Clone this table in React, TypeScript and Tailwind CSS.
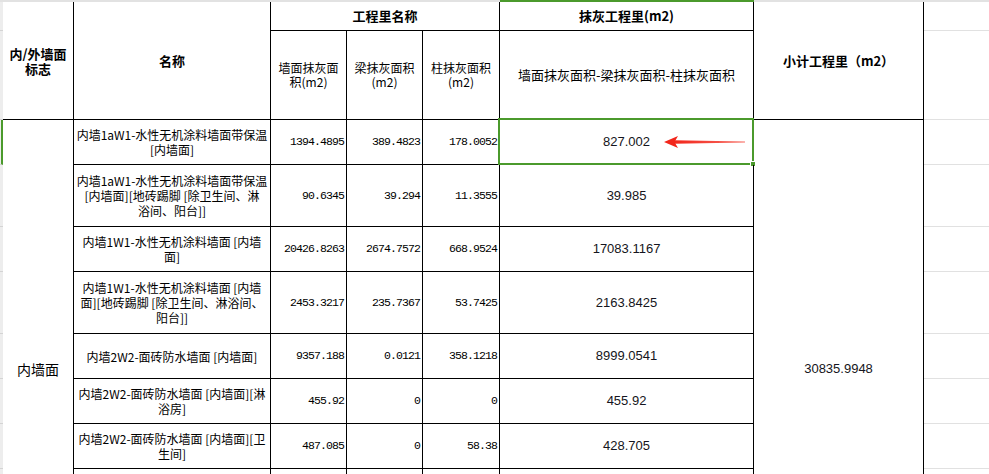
import React from "react";

const cjk = "font-['Noto_Sans_CJK_SC',sans-serif]";
const mono = "font-['Liberation_Mono',monospace] text-[11.5px] tracking-[-0.9px]";
const arial = "font-['Liberation_Sans',Arial,sans-serif] text-[13px]";

const rows = [
  {
    h: "h-[45px]",
    name: ["内墙1aW1-水性无机涂料墙面带保温", "[内墙面]"],
    c: "1394.4895",
    d: "389.4823",
    e: "178.0052",
    f: "827.002",
    selected: true,
  },
  {
    h: "h-[62px]",
    name: ["内墙1aW1-水性无机涂料墙面带保温", "[内墙面][地砖踢脚 [除卫生间、淋", "浴间、阳台]]"],
    c: "90.6345",
    d: "39.294",
    e: "11.3555",
    f: "39.985",
  },
  {
    h: "h-[45px]",
    name: ["内墙1W1-水性无机涂料墙面 [内墙", "面]"],
    c: "20426.8263",
    d: "2674.7572",
    e: "668.9524",
    f: "17083.1167",
  },
  {
    h: "h-[62px]",
    name: ["内墙1W1-水性无机涂料墙面 [内墙", "面][地砖踢脚 [除卫生间、淋浴间、", "阳台]]"],
    c: "2453.3217",
    d: "235.7367",
    e: "53.7425",
    f: "2163.8425",
  },
  {
    h: "h-[45px]",
    name: ["内墙2W2-面砖防水墙面 [内墙面]"],
    c: "9357.188",
    d: "0.0121",
    e: "358.1218",
    f: "8999.0541",
  },
  {
    h: "h-[45px]",
    name: ["内墙2W2-面砖防水墙面 [内墙面][淋", "浴房]"],
    c: "455.92",
    d: "0",
    e: "0",
    f: "455.92",
  },
  {
    h: "h-[45px]",
    name: ["内墙2W2-面砖防水墙面 [内墙面][卫", "生间]"],
    c: "487.085",
    d: "0",
    e: "58.38",
    f: "428.705",
  },
  { h: "h-[45px]", name: [], c: "", d: "", e: "", f: "" },
  { h: "h-[45px]", name: [], c: "", d: "", e: "", f: "" },
  { h: "h-[60px]", name: [], c: "", d: "", e: "", f: "" },
];

function Arrow() {
  return (
    <svg
      className="absolute left-[164px] top-[15px]"
      width="82"
      height="14"
      viewBox="0 0 82 14"
    >
      <defs>
        <linearGradient id="tail" x1="0" x2="1" y1="0" y2="0">
          <stop offset="0" stopColor="#f2261b" />
          <stop offset="1" stopColor="#f76a60" />
        </linearGradient>
      </defs>
      <path d="M10 5.3 L81 6.5 L81 7.5 L10 8.7 Z" fill="url(#tail)" />
      <path d="M0 7 L14 1 L10.5 7 L14 13 Z" fill="#f2261b" />
    </svg>
  );
}

export default function App() {
  const line = "border-r border-b border-black";
  const grid = "border-b border-[#e1e1e1]";
  const strip = "bg-[#ededed] border-b border-[#d4d4d4]";

  return (
    <div className="w-[989px] h-[474px] overflow-hidden bg-white text-black">
      {/* top gridline with column highlight */}
      <div className="flex h-[2px]">
        <div className="w-[500px] bg-[#e2e2e2]" />
        <div className="w-[254px] bg-[#4b9a2c]" />
        <div className="flex-1 bg-[#e2e2e2]" />
      </div>

      <table className="w-[989px] table-fixed border-separate border-spacing-0">
        <colgroup>
          <col className="w-[3px]" />
          <col className="w-[71px]" />
          <col className="w-[197px]" />
          <col className="w-[76px]" />
          <col className="w-[76px]" />
          <col className="w-[77px]" />
          <col className="w-[254px]" />
          <col className="w-[170px]" />
          <col />
        </colgroup>
        <tbody>
          <tr className="h-[29px]">
            <td className={strip} />
            <td rowSpan={2} className={`${line} ${cjk} text-[13px] font-bold leading-[15px] text-center align-middle p-0`}>
              内/外墙面
              <br />
              标志
            </td>
            <td rowSpan={2} className={`${line} ${cjk} text-[13px] font-bold text-center align-middle p-0`}>
              名称
            </td>
            <td colSpan={3} className={`${line} ${cjk} text-[13px] font-bold text-center align-middle p-0`}>
              工程里名称
            </td>
            <td className={`${line} ${cjk} text-[13px] font-bold text-center align-middle p-0`}>
              抹灰工程里(m2)
            </td>
            <td rowSpan={2} className={`${line} ${cjk} text-[13px] font-bold text-center align-middle p-0`}>
              小计工程里（m2）
            </td>
            <td className={grid} />
          </tr>
          <tr className="h-[89px]">
            <td className={strip} />
            <td className={`${line} ${cjk} text-[12px] leading-[14px] text-center align-middle p-0`}>
              墙面抹灰面
              <br />
              积(m2)
            </td>
            <td className={`${line} ${cjk} text-[12px] leading-[14px] text-center align-middle p-0`}>
              梁抹灰面积
              <br />
              (m2)
            </td>
            <td className={`${line} ${cjk} text-[12px] leading-[14px] text-center align-middle p-0`}>
              柱抹灰面积
              <br />
              (m2)
            </td>
            <td className={`${line} ${cjk} text-[13px] text-center align-middle p-0`}>
              墙面抹灰面积-梁抹灰面积-柱抹灰面积
            </td>
            <td className={grid} />
          </tr>

          {rows.map((r, i) => (
            <tr key={i} className={r.h}>
              <td className={r.selected ? "bg-[#ededed] border-b border-r-2 border-b-[#d4d4d4] border-r-[#4b9a2c]" : strip} />
              {i === 0 && (
                <td rowSpan={rows.length} className={`${line} ${cjk} text-[14px] text-center align-middle p-0`}>
                  内墙面
                </td>
              )}
              <td className={`${line} ${cjk} text-[12px] leading-[15px] text-center align-middle p-0`}>
                {r.name.map((t, j) => (
                  <div key={j} className="whitespace-nowrap">
                    {t}
                  </div>
                ))}
              </td>
              <td className={`${line} ${mono} text-right align-middle p-0 pr-[2px]`}>{r.c}</td>
              <td className={`${line} ${mono} text-right align-middle p-0 pr-[2px]`}>{r.d}</td>
              <td className={`${line} ${mono} text-right align-middle p-0 pr-[2px]`}>{r.e}</td>
              <td className={`${line} ${arial} text-[#151520] text-center align-middle p-0 relative`}>
                {r.f}
                {r.selected && (
                  <>
                    <div className="absolute -left-[2px] -top-[2px] -right-[1px] -bottom-[1px] border-2 border-[#4b9a2c]" />
                    <div className="absolute -right-[3px] -bottom-[3px] w-[6px] h-[6px] bg-[#4b9a2c] border border-white" />
                    <Arrow />
                  </>
                )}
              </td>
              {i === 0 && (
                <td rowSpan={rows.length} className={`${line} ${arial} text-[#151520] text-center align-middle p-0`}>
                  30835.9948
                </td>
              )}
              <td className={grid} />
            </tr>
          ))}
        </tbody>
      </table>
    </div>
  );
}
